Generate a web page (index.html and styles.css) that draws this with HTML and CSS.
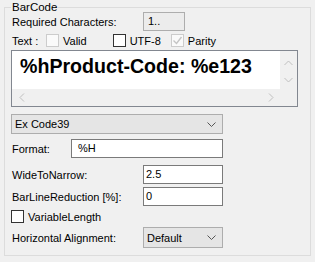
FILE: index.html
```html
<!DOCTYPE html>
<html lang="en">
<head>
    <meta charset="UTF-8">
    <title>BarCode</title>
    <link rel="stylesheet" href="styles.css">
</head>
<body>
    <div class="group">
        <span class="group-title">BarCode</span>

        <div class="row row-req">
            <span class="label">Required Characters:</span>
            <span class="btn">1..</span>
        </div>

        <div class="row row-text">
            <span class="label">Text :</span>
            <span class="check disabled check-valid"></span>
            <span class="check-label">Valid</span>
            <span class="check check-utf"></span>
            <span class="check-label">UTF-8</span>
            <span class="check disabled checked check-parity">
                <svg width="11" height="11" viewBox="0 0 11 11"><path d="M1.5 5.5 L4.5 8.5 L9.5 2" fill="none" stroke="#c4c4c4" stroke-width="1.4"/></svg>
            </span>
            <span class="check-label">Parity</span>
        </div>

        <div class="memo">
            <div class="memo-text">%hProduct-Code: %e123</div>
            <div class="vscroll">
                <svg width="9" height="6" viewBox="0 0 9 6"><path d="M0.5 5 L4.5 1 L8.5 5" fill="none" stroke="#bfbfbf"/></svg>
                <svg width="9" height="6" viewBox="0 0 9 6"><path d="M0.5 1 L4.5 5 L8.5 1" fill="none" stroke="#bfbfbf"/></svg>
            </div>
            <div class="hscroll">
                <svg width="6" height="9" viewBox="0 0 6 9"><path d="M5 0.5 L1 4.5 L5 8.5" fill="none" stroke="#bfbfbf"/></svg>
                <svg width="6" height="9" viewBox="0 0 6 9"><path d="M1 0.5 L5 4.5 L1 8.5" fill="none" stroke="#bfbfbf"/></svg>
            </div>
            <div class="corner"></div>
        </div>

        <div class="combo combo-type">
            <span>Ex Code39</span>
            <svg width="9" height="5" viewBox="0 0 9 5"><path d="M0.5 0.5 L4.5 4.5 L8.5 0.5" fill="none" stroke="#555"/></svg>
        </div>

        <div class="row row-format">
            <span class="label">Format:</span>
            <span class="input input-format">%H</span>
        </div>

        <div class="row row-wide">
            <span class="label">WideToNarrow:</span>
            <span class="input input-short">2.5</span>
        </div>

        <div class="row row-barline">
            <span class="label">BarLineReduction [%]:</span>
            <span class="input input-short">0</span>
        </div>

        <div class="row row-var">
            <span class="check check-var"></span>
            <span class="check-label">VariableLength</span>
        </div>

        <div class="row row-align">
            <span class="label">Horizontal Alignment:</span>
            <div class="combo combo-align">
                <span>Default</span>
                <svg width="9" height="5" viewBox="0 0 9 5"><path d="M0.5 0.5 L4.5 4.5 L8.5 0.5" fill="none" stroke="#555"/></svg>
            </div>
        </div>
    </div>
</body>
</html>
```

FILE: styles.css
```css
* {
    margin: 0;
    padding: 0;
    box-sizing: border-box;
}

body {
    width: 315px;
    height: 262px;
    background: #f0f0f0;
    font-family: 'Liberation Sans', Arial, sans-serif;
    font-size: 11px;
    color: #000;
    overflow: hidden;
}

.group {
    position: relative;
    margin: 7px 0 0 4px;
    width: 307px;
    height: 249px;
    border: 1px solid #dcdcdc;
    padding: 4px 0 0 6px;
}

.group-title {
    position: absolute;
    top: -8px;
    left: 6px;
    padding: 0 1px;
    background: #f0f0f0;
    font-size: 11.5px;
    line-height: 14px;
}

.row {
    display: flex;
    align-items: center;
}

.label {
    padding-left: 1px;
}

.row-req {
    height: 19px;
    margin-bottom: 2px;
}

.row-req .label {
    width: 132px;
}

.btn {
    width: 42px;
    height: 19px;
    border: 1px solid #adadad;
    background: #ececec;
    padding-left: 4px;
    line-height: 17px;
}

.row-text {
    height: 15px;
    margin-bottom: 2px;
}

.row-text .label {
    width: 35px;
}

.check {
    width: 13px;
    height: 13px;
    border: 1px solid #333;
    background: #fff;
    display: flex;
    align-items: center;
    justify-content: center;
}

.check.disabled {
    border-color: #cccccc;
    background: #fafafa;
}

.check-label {
    margin-left: 4px;
}

.check-utf {
    margin-left: 26px;
}

.check-parity {
    margin-left: 10px;
}

.memo {
    width: 287px;
    height: 57px;
    border: 1px solid #828790;
    display: grid;
    grid-template-columns: 1fr 17px;
    grid-template-rows: 1fr 17px;
    margin-bottom: 7px;
}

.memo-text {
    background: #fff;
    font-weight: bold;
    font-size: 19.6px;
    line-height: 22px;
    padding: 4px 0 0 8px;
    white-space: nowrap;
    overflow: hidden;
}

.vscroll {
    background: #f0f0f0;
    display: flex;
    flex-direction: column;
    justify-content: space-between;
    align-items: center;
    padding: 9px 0 6px;
}

.hscroll {
    background: #f0f0f0;
    display: flex;
    justify-content: space-between;
    align-items: center;
    padding: 0 6px 0 7px;
}

.corner {
    background: #f0f0f0;
}

.combo {
    height: 20px;
    border: 1px solid #adadad;
    background: #e5e5e5;
    display: flex;
    align-items: center;
    justify-content: space-between;
    padding: 0 6px 0 3px;
}

.combo-type {
    width: 212px;
    margin-bottom: 5px;
}

.combo-align {
    width: 80px;
    height: 21px;
}

.input {
    height: 19px;
    border: 1px solid #7a7a7a;
    background: #fff;
    padding-left: 6px;
    line-height: 17px;
}

.row-format {
    height: 19px;
    margin-bottom: 7px;
}

.row-format .label {
    width: 60px;
}

.input-format {
    width: 152px;
}

.row-wide .label,
.row-barline .label,
.row-align .label {
    width: 132px;
}

.input-short {
    width: 80px;
    padding-left: 2px;
}

.row-wide {
    height: 19px;
    margin-bottom: 3px;
}

.row-barline {
    height: 19px;
    margin-bottom: 4px;
}

.row-var {
    height: 13px;
    margin-bottom: 4px;
}

.row-align {
    height: 21px;
}
```
